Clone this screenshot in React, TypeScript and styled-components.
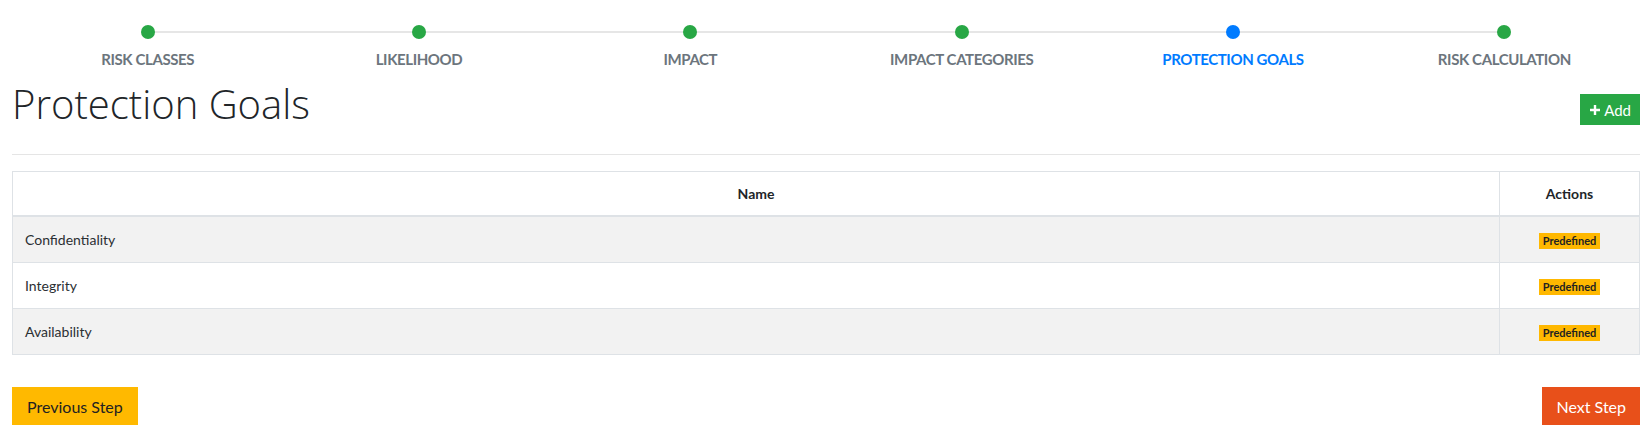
import React, { FC } from 'react';
import styled, { createGlobalStyle } from 'styled-components';

const GlobalStyle = createGlobalStyle`
  html, body {
    margin: 0;
    padding: 0;
    background: #fff;
  }
  body {
    font-family: Lato, "Open Sans", sans-serif;
    color: #212529;
    font-size: 14px;
  }
  * {
    box-sizing: border-box;
  }
`;

const Page = styled.div`
  padding: 0 12px;
`;

const Stepper = styled.div`
  display: grid;
  grid-template-columns: repeat(6, 1fr);
  padding-top: 25px;
`;

const Step = styled.div<{ last: boolean }>`
  position: relative;
  display: flex;
  flex-direction: column;
  align-items: center;

  &::after {
    content: '';
    display: ${(props) => (props.last ? 'none' : 'block')};
    position: absolute;
    top: 6px;
    left: 50%;
    width: 100%;
    height: 2px;
    background: #e6e6e6;
  }
`;

const Dot = styled.span<{ active: boolean }>`
  position: relative;
  z-index: 1;
  width: 14px;
  height: 14px;
  border-radius: 50%;
  background: ${(props) => (props.active ? '#007bff' : '#28a745')};
`;

const StepLabel = styled.span<{ active: boolean }>`
  margin-top: 12px;
  font-size: 15px;
  line-height: 17px;
  font-weight: 700;
  text-transform: uppercase;
  letter-spacing: -0.4px;
  color: ${(props) => (props.active ? '#007bff' : '#6c757d')};
`;

const HeaderRow = styled.div`
  display: flex;
  justify-content: space-between;
  align-items: flex-start;
  margin-top: 12px;
  padding-bottom: 26px;
  border-bottom: 1px solid #e5e5e5;
`;

const Title = styled.h1`
  margin: 0;
  font-family: "Open Sans", Lato, sans-serif;
  font-size: 40px;
  line-height: 48px;
  font-weight: 300;
  color: #212529;
`;

const AddButton = styled.button`
  display: flex;
  align-items: center;
  gap: 3px;
  height: 31px;
  margin-top: 14px;
  padding: 0 9px;
  border: none;
  background: #28a745;
  color: #fff;
  font-family: inherit;
  font-size: 15px;
`;

const Table = styled.table`
  width: 100%;
  margin-top: 16px;
  border-collapse: collapse;
  border: 1px solid #dee2e6;
`;

const Th = styled.th<{ narrow?: boolean }>`
  width: ${(props) => (props.narrow ? '140px' : 'auto')};
  padding: 11px 12px;
  font-size: 14px;
  line-height: 21px;
  font-weight: 700;
  text-align: center;
  color: #212529;
  border: 1px solid #dee2e6;
  border-bottom: 2px solid #dee2e6;
`;

const Row = styled.tr<{ striped: boolean }>`
  background: ${(props) => (props.striped ? '#f2f2f2' : '#fff')};
`;

const Td = styled.td<{ center?: boolean }>`
  padding: 12px;
  font-size: 14px;
  line-height: 21px;
  color: #2b2f33;
  text-align: ${(props) => (props.center ? 'center' : 'left')};
  border: 1px solid #dee2e6;
`;

const Badge = styled.span`
  display: inline-block;
  padding: 2px 4px;
  background: #ffb800;
  color: #222;
  font-size: 11px;
  line-height: 12px;
  font-weight: 700;
`;

const Footer = styled.div`
  display: flex;
  justify-content: space-between;
  margin-top: 32px;
`;

const StepButton = styled.button<{ variant: 'prev' | 'next' }>`
  height: 38px;
  padding: 0 ${(props) => (props.variant === 'prev' ? '15px' : '14px')};
  border: none;
  font-family: inherit;
  font-size: 16px;
  background: ${(props) => (props.variant === 'prev' ? '#ffb900' : '#e8501a')};
  color: ${(props) => (props.variant === 'prev' ? '#222' : '#fff')};
`;

const steps = [
  'Risk Classes',
  'Likelihood',
  'Impact',
  'Impact Categories',
  'Protection Goals',
  'Risk Calculation',
];

const goals = ['Confidentiality', 'Integrity', 'Availability'];

const PlusIcon: FC = () => (
  <svg width="12" height="12" viewBox="0 0 12 12">
    <path d="M6 1v10M1 6h10" stroke="#fff" strokeWidth="2.4" />
  </svg>
);

const App: FC = () => {
  const activeStep = 4;

  return (
    <Page>
      <GlobalStyle />
      <Stepper>
        {steps.map((step, i) => (
          <Step key={step} last={i === steps.length - 1}>
            <Dot active={i === activeStep} />
            <StepLabel active={i === activeStep}>{step}</StepLabel>
          </Step>
        ))}
      </Stepper>
      <HeaderRow>
        <Title>Protection Goals</Title>
        <AddButton>
          <PlusIcon />
          Add
        </AddButton>
      </HeaderRow>
      <Table>
        <thead>
          <tr>
            <Th>Name</Th>
            <Th narrow>Actions</Th>
          </tr>
        </thead>
        <tbody>
          {goals.map((goal, i) => (
            <Row key={goal} striped={i % 2 === 0}>
              <Td>{goal}</Td>
              <Td center>
                <Badge>Predefined</Badge>
              </Td>
            </Row>
          ))}
        </tbody>
      </Table>
      <Footer>
        <StepButton variant="prev">Previous Step</StepButton>
        <StepButton variant="next">Next Step</StepButton>
      </Footer>
    </Page>
  );
};

export default App;
